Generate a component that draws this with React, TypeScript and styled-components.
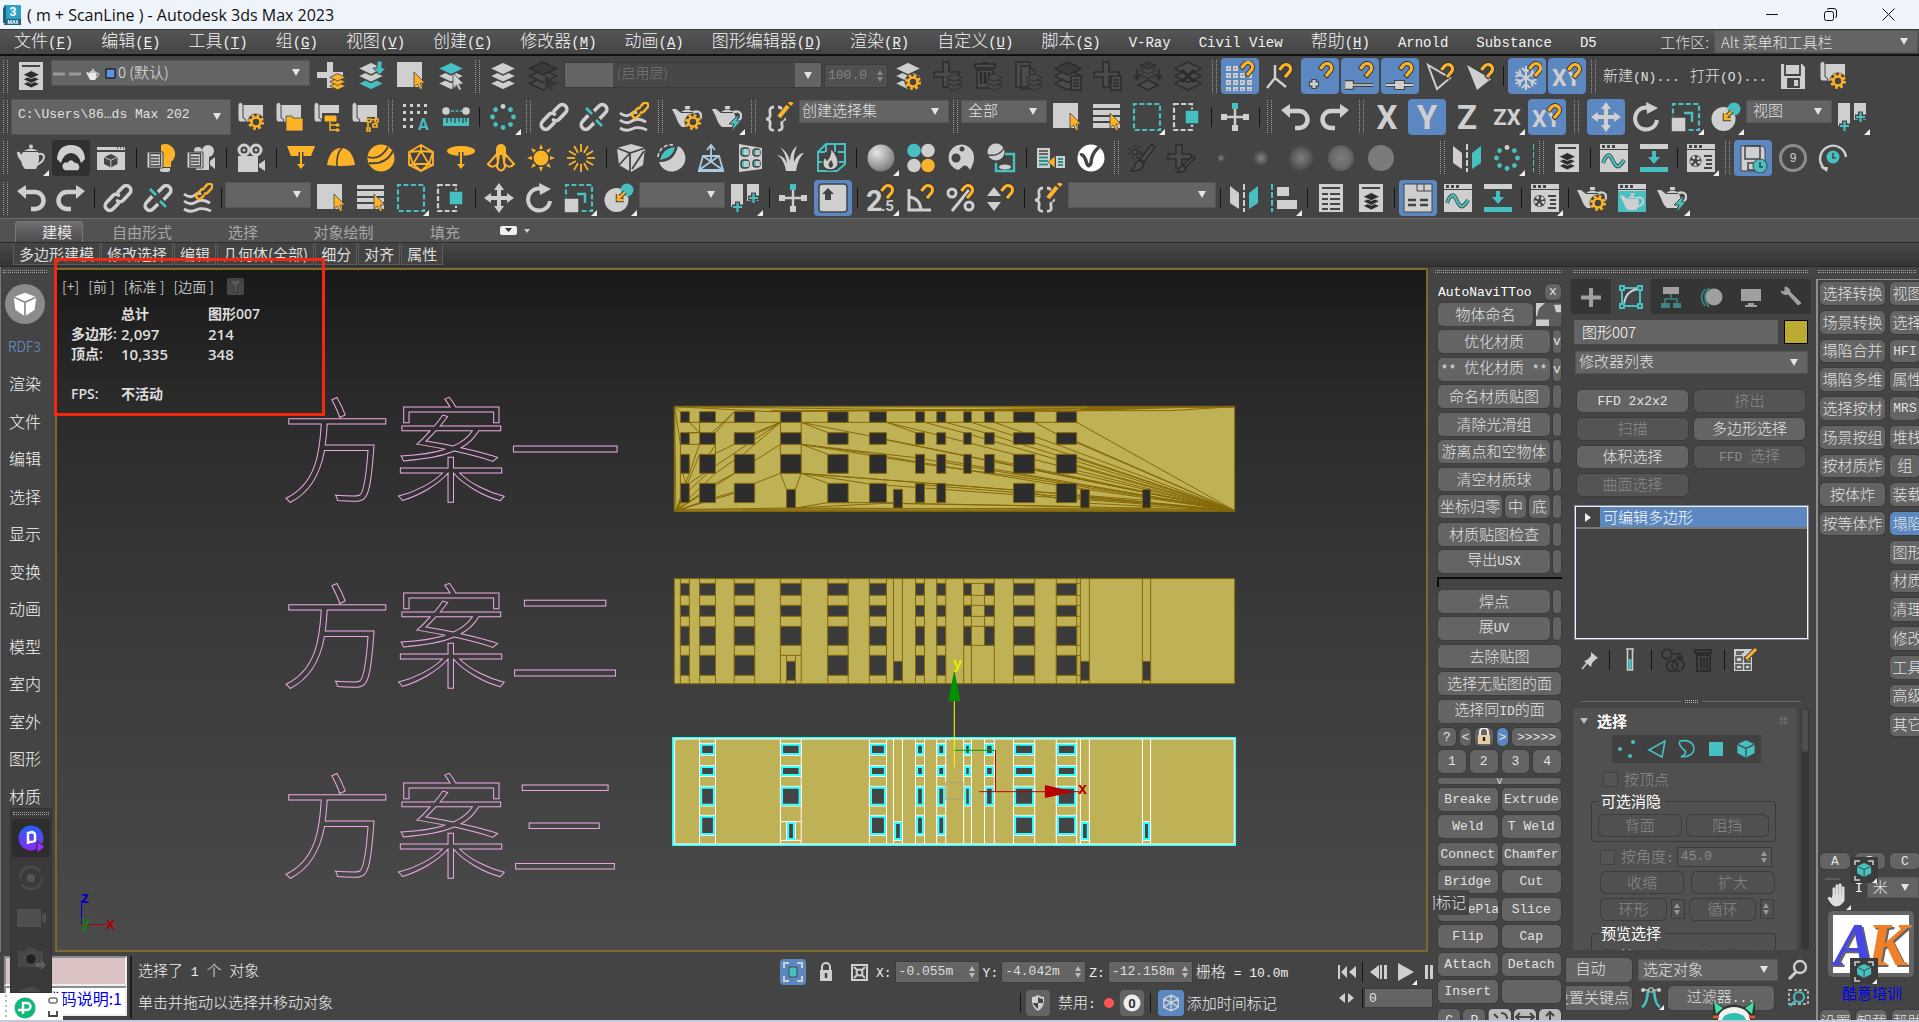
import React from "react";
import styled, { createGlobalStyle, css } from "styled-components";

const L = "#cfcfcf";
const T = "#46c0c0";
const O = "#fdb327";
const K = "#2c2c2c";
const BG = "#444444";
const BLUE = "#5c88c2";
const FIELD = "#646464";
const SANS = `"Noto Sans CJK SC", "Noto Sans", sans-serif`;
const MONO = `"Liberation Mono", "Noto Sans CJK SC", monospace`;

const Global = createGlobalStyle`
  * { box-sizing: border-box; }
  body { margin: 0; background: ${BG}; color: #e6e6e6; font: 300 15px/18px ${SANS}; overflow: hidden; }
  button, select, input { font: inherit; color: inherit; margin: 0; padding: 0; border: 0; background: none; }
  svg { display: block; flex: none; }
`;

/* ---------- mixed width text ---------- */
const Half = styled.span<{ $s: number }>`
  font-family: ${MONO};
  font-size: ${(p) => p.$s}px;
  font-weight: 400;
`;
const Pre = styled.span`
  white-space: pre;
`;
const Txt = ({ t, s = 13 }: { t: string; s?: number }) => (
  <Pre>
    {(t.match(/[\u3000-\uffef]+|[^\u3000-\uffef]+/g) || []).map((p, i) =>
      /[\u3000-\uffef]/.test(p) ? <React.Fragment key={i}>{p}</React.Fragment> : <Half key={i} $s={s}>{p}</Half>
    )}
  </Pre>
);

/* ---------- icon parts ---------- */
const Stack = ({ c = [L, L, L], s = BG, f = 1 }: { c?: string[]; s?: string; f?: number }) => (
  <g stroke={s} strokeWidth="1.4" transform={`scale(${f})`}>
    <path d="M15 16 28.500 22.500 15 29 1.500 22.500z" fill={c[2]} />
    <path d="M15 8.500 28.500 15 15 21.500 1.500 15z" fill={c[1]} />
    <path d="M15 1 28.500 7.500 15 14 1.500 7.500z" fill={c[0]} />
  </g>
);
const Gear = ({ x, y, c = O, b = BG }: { x: number; y: number; c?: string; b?: string }) => (
  <g fill="none">
    <circle cx={x} cy={y} r="8.500" fill={b} />
    <circle cx={x} cy={y} r="6.500" stroke={c} strokeWidth="3" strokeDasharray="2.6 2.5" />
    <circle cx={x} cy={y} r="4.500" stroke={c} strokeWidth="2.600" />
  </g>
);
const Magnet = ({ x = 21, y = 8 }: { x?: number; y?: number }) => (
  <g transform={`translate(${x} ${y}) rotate(40)`} fill="none">
    <path d="M-8 4.500H0a4.500 4.500 0 0 0 0-9H-6" transform="rotate(-90)" stroke="#333" strokeWidth="5" />
    <path d="M-7 4.500H0a4.500 4.500 0 0 0 0-9H-5" transform="rotate(-90)" stroke={O} strokeWidth="3.200" />
  </g>
);
const Arrow = ({ x = 18, y = 11, c = O }: { x?: number; y?: number; c?: string }) => (
  <path transform={`translate(${x} ${y})`} d="M0 0V15L3.500 12 6 17.500 8.500 16.300 6 11H11z" fill={c} stroke={BG} strokeWidth=".8" />
);
const Pot = ({ x = 0, y = 0, c = L }: { x?: number; y?: number; c?: string }) => (
  <g transform={`translate(${x} ${y})`} fill={c}>
    <circle cx="15" cy="3.500" r="2" />
    <path d="M8 8q7-5 14 0z" />
    <path d="M7 9H22q3 8-2 17H9q-3-3-4-8Q1 14 1 9q3-1 4 3z" />
    <path d="M22 11q6-1 6 3t-7 8" fill="none" stroke={c} strokeWidth="2" />
  </g>
);
const FlatPot = ({ c = L }: { c?: string }) => (
  <g fill={c}>
    <path d="M13 4h5v3h-5zM9 10q6-5 13 0z" />
    <path d="M0 7H4L9 11H22q4 6-2 14H10Q6 22 4 15z" />
    <path d="M21 10q7-2 8 3t-7 8" fill="none" stroke={c} strokeWidth="2.400" />
  </g>
);
const Bolt = () => <path d="M27 12 17 22h5l-3 8 10-11h-4z" fill={T} stroke={BG} strokeWidth="1" />;
const Chain = ({ cut = false }: { cut?: boolean }) => (
  <g fill="none" stroke={L} strokeWidth="3.600" strokeLinecap="round">
    <path d="M15 9l5-5a4.500 4.500 0 0 1 6.500 6.500l-6 6.500a4.500 4.500 0 0 1-6 1" />
    <path d="M15 21l-5 5A4.500 4.500 0 0 1 3.500 19.500l6-6.500a4.500 4.500 0 0 1 6-1" />
    {cut && <path d="M8 7l7 7M16 17l7 7" stroke={BG} strokeWidth="7" />}
    {cut && <path d="M7 6l6 6M17 18l6 6" stroke={T} strokeWidth="2.800" strokeLinecap="butt" />}
  </g>
);
const Scroll = () => (
  <g fill={L}>
    <path d="M7 3H27V20H7z" />
    <path d="M2 3q0-2.500 2.500-2.500T7 3V16q3 0 3 4H4.500Q2 20 2 17z" stroke={BG} strokeWidth="1" />
  </g>
);
const Win = () => (
  <g>
    <path d="M1 1H29V6H1zM1 7H29V29H1z" fill={L} />
    <path d="M3 2h3v3H3zM8 2h3v3H8zM13 2h3v3h-3z" fill={BG} />
  </g>
);
const Braces = () => (
  <g fill="none" stroke={L} strokeWidth="2.800">
    <path d="M10 5Q5 5 6 11T2 17q5 0 4 6t4 5M14 5q5 0 4 6t4 6q-5 0-4 6t-4 5" />
    <path d="M15 17 27 2" stroke={BG} strokeWidth="8" />
    <path d="M15 15 24 4M25.500 2.500 28 0" stroke={O} strokeWidth="4.200" />
  </g>
);
const Dashed = ({ c }: { c: string }) => (
  <path d="M2 2H28V28H2z" fill="none" stroke={c} strokeWidth="2.200" strokeDasharray="5 2.430" strokeDashoffset="2" />
);
const Letter = ({ t, s = 33 }: { t: string; s?: number }) => (
  <text x="15" y={s > 26 ? 27 : 23} textAnchor="middle" fontFamily="Roboto, sans-serif" fontWeight="700" fontSize={s} fill={L}>{t}</text>
);
const CubeShape = ({ c = T, e = BG }: { c?: string; e?: string }) => (
  <g>
    <path d="M15 2 28 8V21L15 28 2 21V8z" fill={c} />
    <path d="M2 8 15 14 28 8M15 14V28" fill="none" stroke={e} strokeWidth="1.800" />
  </g>
);
const Doc = () => <path d="M3 1H27V29H3z" fill={L} />;
const Sheet = () => <path d="M1 1H26V26H1z" fill={L} />;

const dim = { fill: "#4b4b4b", stroke: K, strokeWidth: 1.500 };
const DimStack = () => (
  <g transform="translate(12 12)"><Stack c={["#484848", "#484848", "#484848"]} s={K} f={0.6} /></g>
);

const icons: Record<string, React.ReactNode> = {
  explorer: <g><Doc /><path d="M6 5H24" stroke={BG} strokeWidth="2" /><g transform="translate(6 9)"><Stack c={[K, K, K]} s={L} f={0.62} /></g></g>,
  layerAdd: <g><path d="M11 1h6v10h10v6H17v10h-6V17H1v-6h10z" fill={L} /><g transform="translate(13 12)"><Stack c={[O, O, O]} f={0.58} /></g></g>,
  layerDown: <g><Stack c={[L, L, T]} /><path d="M21 0h5v7h4l-6.500 7L17 7h4z" fill={T} stroke={BG} /></g>,
  sel: <g><Sheet /><Arrow /></g>,
  layerSel: <g><Stack c={[T, L, L]} /><Arrow x={17} y={12} c={L} /></g>,
  layers: <Stack />,
  layersDim: <g><Stack c={["#3a3a3a", "#4a4a4a", "#4a4a4a"]} s={K} /><Arrow x={17} y={13} c="#333" /></g>,
  layerGear: <g><Stack /><Gear x={20} y={21} /></g>,
  dAdd: <g {...dim}><path d="M10 1h6v10h10v5H16v10h-6V16H1v-5h9z" /><DimStack /></g>,
  dTrash: <g {...dim}><path d="M8 3q4-3 8 0M2 3H22V7H2zM4 9H20V27H4z" /><path d="M8 11V23M12 11V23M16 11V19" strokeWidth="2.500" /><DimStack /></g>,
  dDoc: <g {...dim}><path d="M3 1H17V26H3zM8 5H16L22 11V28H8z" /><DimStack /></g>,
  dPaste: <g {...dim}><Stack c={["#3a3a3a", "#4a4a4a", "#4a4a4a"]} s={K} /><path d="M18 15H28V29H18zM20 19h6M20 22h6M20 25h6" /></g>,
  dAddPaste: <g {...dim}><path d="M10 1h6v10h10v5H16v10h-6V16H1v-5h9z" /><path d="M18 15H28V29H18zM20 19h6M20 22h6M20 25h6" /></g>,
  dMerge: <g {...dim}><g transform="translate(6 0)"><Stack c={["#3a3a3a", "#484848", "#484848"]} s={K} f={0.6} /></g><path d="M15 19 25 24 15 29 5 24zM4 8v9M26 8v9M1 14l3 4 3-4M23 14l3 4 3-4" /></g>,
  dX: <g><Stack c={["#4a4a4a", "#4a4a4a", "#4a4a4a"]} s={K} /><path d="M9 9 21 21M21 9 9 21" stroke={K} strokeWidth="3" /></g>,
  mGrid: <g><g fill={BG} stroke={L} strokeWidth="1.800">{[0, 1, 2, 3].map((r) => [0, 1, 2, 3].map((c) => (r === 0 && c > 1 ? null : <path key={r + "-" + c} d={`M${2 + c * 7} ${6 + r * 7}h3v3h-3z`} />)))}</g><Magnet x={23} y={6} /></g>,
  mAxis: <g><path d="M10 4V17L2 27M10 17l11 9" fill="none" stroke={L} strokeWidth="2.400" /><Magnet x={21} y={8} /></g>,
  mPoint: <g><path d="M9 18v10M4 23h10" stroke={BG} strokeWidth="5.500" /><path d="M9 19v8M5 23h8" stroke={L} strokeWidth="3" /><Magnet x={22} y={7} /></g>,
  mEnd: <g><path d="M1 21h6v6H1zM7 24H28" fill={L} stroke={BG} strokeWidth="4" /><path d="M1 21h6v6H1zM7 24H28" fill={L} stroke={L} strokeWidth="1.600" /><Magnet x={22} y={7} /></g>,
  mMid: <g><path d="M1 24H28M11 21h7v6h-7z" fill={L} stroke={BG} strokeWidth="4" /><path d="M1 24H28M11 21h7v6h-7z" fill={L} stroke={L} strokeWidth="1.800" /><Magnet x={22} y={7} /></g>,
  mTri: <g><path d="M3 4 12 28 25 17z" fill="none" stroke={L} strokeWidth="2" /><Magnet x={23} y={8} /></g>,
  mTriF: <g><path d="M2 4 12 29 26 18z" fill={L} /><Magnet x={23} y={8} /></g>,
  mSnow: <g><g stroke={L} strokeWidth="2" fill="none">{[0, 60, 120].map((a) => <g key={a} transform={`rotate(${a} 14 17)`}><path d="M14 5V29M10 7l4 4 4-4M10 27l4-4 4 4" /></g>)}</g><Magnet x={24} y={7} /></g>,
  mXY: <g><text x="0" y="25" fontFamily="Roboto, sans-serif" fontWeight="700" fontSize="23" fill={L}>XY</text><Magnet x={23} y={8} /></g>,
  save: <g><path d="M3 3H24L27 6V28H3z" fill={L} /><path d="M7 3H22V14H7zM10 18H21V26H10z" fill="none" stroke={BG} strokeWidth="1.800" /><path d="M10 18h6v8h-6z" fill={BG} /></g>,
  sGear: <g><Scroll /><Gear x={20} y={20} /></g>,
  sFolder: <g><Scroll /><path d="M12 14h6l1 2h10v13H12z" fill={O} stroke={BG} strokeWidth=".8" /></g>,
  sTree: <g><Scroll /><path d="M12 13h13v8H12zM18 21v7h4M18 24h4M22 23h5v2h-5zM22 27h5v2h-5z" fill="none" stroke={BG} strokeWidth="4" /><path d="M13 14h11v5H13zM24 22h3v2h-3zM24 27h3v2h-3z" fill={O} stroke={O} /><path d="M18 20v8h6M18 23h6" fill="none" stroke={O} strokeWidth="1.500" /></g>,
  sNode: <g><Scroll /><path d="M17 18h5v4M26 17v5M17 22v6" stroke={BG} strokeWidth="6" fill="none" /><path d="M17 17h4v3h-4zM25 17h3v3h-3zM17 26h3v3h-3zM23 22h4v3h-4zM21 18l5-1M18 21v4" fill="none" stroke={O} strokeWidth="1.600" /></g>,
  gridA: <g><g fill={L}>{[0, 1, 2, 3].map((r) => [0, 1, 2, 3].map((c) => (r > 1 && c > 1 ? null : <path key={r + "-" + c} d={`M${2 + c * 7} ${2 + r * 7}h3v3h-3z`} />)))}</g><text x="17" y="28" fontFamily="Roboto, sans-serif" fontWeight="700" fontSize="16" fill={T}>A</text></g>,
  ruler: <g><circle cx="5" cy="9" r="3.800" fill={L} /><circle cx="25" cy="9" r="3.800" fill={L} /><path d="M10 9H21" stroke={T} strokeWidth="1.600" strokeDasharray="3 1.500" /><path d="M2 16H28V24H2z" fill={T} /><path d="M6 16v5M10 16v4M14 16v5M18 16v4M22 16v5M25 16v4" stroke={BG} strokeWidth="1.300" /></g>,
  ring: <g>{[0, 45, 90, 135, 180, 225, 270, 315].map((a) => <circle key={a} cx="15" cy="4.500" r="2.400" fill={a ? T : L} transform={`rotate(${a} 15 15)`} />)}</g>,
  link: <Chain />,
  unlink: <Chain cut />,
  bind: <g><path d="M1 11q6 5 11 1t5 0M1 18q6 5 12 1t14 1M1 26q6 4 12 1t15 1" fill="none" stroke={L} strokeWidth="2.800" /><g transform="translate(12 -1) scale(.62)"><path d="M15 9l5-5a4.500 4.500 0 0 1 6.500 6.500l-6 6.500a4.500 4.500 0 0 1-6 1M15 21l-5 5A4.500 4.500 0 0 1 3.500 19.500l6-6.500a4.500 4.500 0 0 1 6-1" fill="none" stroke={O} strokeWidth="4" /></g></g>,
  potGear: <g><FlatPot /><Gear x={21} y={20} /></g>,
  potBolt: <g><FlatPot /><Bolt /></g>,
  pot: <Pot />,
  braces: <Braces />,
  selName: <g><path d="M1 2H28V6H1zM1 8H28V13H1zM1 15H28V19H1zM1 21H28V26H1z" fill={L} /><Arrow /></g>,
  region: <Dashed c={T} />,
  cross: <g><path d="M2 2H20V28H2z" fill="none" stroke={L} strokeWidth="2.200" strokeDasharray="5 2.200" /><path d="M13 8H27V22H13z" fill={T} stroke={BG} strokeWidth="1.500" /></g>,
  manip: <g><path d="M15 7V23M4 15H26" stroke={L} strokeWidth="2.400" /><path d="M12 1h6v6h-6z" fill={T} /><path d="M12 23h6v6h-6zM1 12h6v6H1zM23 12h6v6h-6z" fill={L} /></g>,
  undo: <g><path d="M8 9H19a7.500 7.500 0 0 1 0 17h-4" fill="none" stroke={L} strokeWidth="4.500" /><path d="M10 2V16L1 8z" fill={L} /></g>,
  redo: <g><path d="M22 9H11a7.500 7.500 0 0 0 0 17h4" fill="none" stroke={L} strokeWidth="4.500" /><path d="M20 2V16L29 8z" fill={L} /></g>,
  X: <Letter t="X" />,
  Y: <Letter t="Y" />,
  Z: <Letter t="Z" />,
  ZX: <Letter t="ZX" s={22} />,
  move: <g fill={L}><path d="M13 6h4v18h-4zM6 13h18v4H6z" /><path d="M15 0l5 7H10zM15 30l5-7H10zM0 15l7-5v10zM30 15l-7-5v10z" /></g>,
  rotate: <g><path d="M22 8A11 11 0 1 0 26 18" fill="none" stroke={L} strokeWidth="4" /><path d="M15 0 27 6 16 12z" fill={L} /></g>,
  scale: <g><Dashed c={T} /><path d="M13 11h8v9" fill="none" stroke={T} strokeWidth="2.400" /><path d="M0 15H15V30H0z" fill={L} stroke={BG} strokeWidth="1.500" /></g>,
  place: <g><circle cx="12.500" cy="17" r="12" fill={L} /><circle cx="23" cy="7" r="6.500" fill={T} /><path d="M13 17l8-8M14 11v6h6" fill="none" stroke={BG} strokeWidth="4.500" /><path d="M13 17l8-8M14 11v6h6" fill="none" stroke={O} strokeWidth="2.400" /></g>,
  pivot: <g><path d="M1 1H13V24H1zM17 1H29V18H17z" fill={L} /><path d="M2 24h11M7.500 18.500v11M18 15h11M23.500 9.500v11" stroke={BG} strokeWidth="5" /><path d="M3 24h9M7.500 19.500v9.500M19 15h9M23.500 10.500v9.500" stroke={T} strokeWidth="2.200" /></g>,
  cloud: <g fill={L}><path d="M1 16Q2 2 15 2T29 16L25 20Q22 10 15 10T5 20z" /><path d="M9 28a5 5 0 0 1-1-9q2-1 3 0 4-5 8 0a5 5 0 0 1 3 9z" stroke="#303030" strokeWidth="1.500" /></g>,
  winCube: <g><path d="M1 4H29V7H1zM1 9H29V27H1z" fill={L} /><path d="M21 5h1M24 5h1M27 5h1" stroke={BG} strokeWidth="1.500" /><g transform="translate(7 10) scale(.52)"><CubeShape c={BG} e={L} /></g></g>,
  bulb: <g><path d="M18 1a10 10 0 0 1 7 18v5H15V2z" fill={O} /><path d="M14 25h10v3l-2 1h-6l-2-1z" fill={L} /><path d="M1 9H17V25H1z" fill={L} stroke={BG} /><path d="M4 10.500H14.500V23H4zM5 14h8M5 17h8M5 20h8" stroke={BG} strokeWidth="1.300" fill="none" /></g>,
  camList: <g><circle cx="22" cy="8" r="6" fill={L} /><circle cx="12" cy="8" r="4" fill={L} /><path d="M10 11H23V27H10zM24 18l5-4v12l-5-4z" fill={L} /><path d="M1 9H17V25H1z" fill={L} stroke={BG} /><path d="M4 10.500H14.500V23H4zM5 14h8M5 17h8M5 20h8" stroke={BG} strokeWidth="1.300" fill="none" /></g>,
  camera: <g><circle cx="8" cy="7" r="5" fill="none" stroke={L} strokeWidth="3" /><circle cx="20" cy="7" r="5" fill="none" stroke={L} strokeWidth="3" /><circle cx="8" cy="7" r="1.500" fill={L} /><circle cx="20" cy="7" r="1.500" fill={L} /><path d="M2 13H22V29H2zM23 21l6-4v11l-6-4z" fill={L} /></g>,
  lightPlane: <g fill={O}><path d="M1 3H29L25 13H5z" /><path d="M15 9v18" stroke={BG} strokeWidth="5" /><path d="M15 9v15" stroke={O} strokeWidth="2" /><path d="M11 21h8l-4 5z" /></g>,
  dome: <g><path d="M1 22Q4 5 15 5T29 22Q15 24 1 22z" fill={O} /><path d="M11 24Q10 10 16 5" fill="none" stroke={BG} strokeWidth="1.600" /></g>,
  ball: <g><circle cx="15" cy="15" r="13.500" fill={O} /><path d="M2 14Q14 18 22 4M3 20Q20 22 27 8" fill="none" stroke={BG} strokeWidth="1.800" /></g>,
  ico: <g fill="none" stroke={O} strokeWidth="1.800"><path d="M15 2 27 9V22L15 28 3 22V9z M15 8 23 21H7zM15 2v6M27 9 15 8 3 9M3 9l4 12-4 1M27 9l-4 12 4 1M7 21l8 7 8-7" /></g>,
  disc: <g><ellipse cx="15" cy="8" rx="14" ry="5" fill={O} /><path d="M15 9V26" stroke={BG} strokeWidth="5" /><path d="M15 9V24" stroke={O} strokeWidth="2" /><path d="M11 21h8l-4 5z" fill={O} /></g>,
  spot: <g fill="none" stroke={O} strokeWidth="2"><path d="M11 11V6a4 4 0 0 1 8 0v5z" fill={O} /><path d="M11 11 2 21q5 6 10-1zM19 11l9 10q-5 6-10-1zM13 12l-2 12q4 7 8 0l-2-12" /></g>,
  sun: <g><circle cx="15" cy="15" r="7.500" fill={O} />{[0, 45, 90, 135, 180, 225, 270, 315].map((a) => <path key={a} d="M13 6L15 1l2 5z" fill={O} transform={`rotate(${a} 15 15)`} />)}</g>,
  burst: <g>{[0, 30, 60, 90, 120, 150, 180, 210, 240, 270, 300, 330].map((a) => <path key={a} d="M15 1v8" stroke={O} strokeWidth="1.800" transform={`rotate(${a} 15 15)`} />)}</g>,
  cubeCut: <g><path d="M15 1 29 5 27 22 15 29 3 22 1 5z" fill={L} /><path d="M1 5 14 10 29 5M14 10V29M14 10 3 22M16 26l12-18" fill="none" stroke={BG} strokeWidth="1.800" /></g>,
  ballCut: <g><path d="M22 3A13.500 13.500 0 1 1 3 19Q18 20 22 3z" fill={L} /><path d="M4 17Q7 5 19 4 17 15 4 17z" fill={T} /><path d="M2 14A13 13 0 0 1 17 2" fill="none" stroke={L} strokeWidth="1.600" strokeDasharray="4 2" /></g>,
  tower: <g fill="none" stroke="#a9cbe2" strokeWidth="1.800"><path d="M7 13H23L27 27H3zM7 13 27 27M23 13 3 27M15 3V19M11 7l4-5 4 5M2 28H28" /></g>,
  instances: <g fill={L}><path d="M3 1 26 5V26L3 29z" /><g fill={T} stroke={BG} strokeWidth="1.500"><rect x="5" y="5" width="8" height="8" rx="3" /><rect x="17" y="6" width="7" height="7" rx="3" /><rect x="5" y="17" width="8" height="8" rx="3" /><rect x="17" y="17" width="7" height="7" rx="3" /></g><path d="M8 6h5v6H8zM20 7h4v5h-4zM8 18h5v6H8zM20 18h4v5h-4z" opacity=".8" /></g>,
  grass: <path d="M10 28Q8 16 1 12q8 1 10 9Q10 10 4 4q8 5 10 14 0-10 7-15-4 9-3 16 4-9 10-9-6 5-8 18z" fill={L} />,
  fire: <g><path d="M2 9 10 1H29V21L21 28H2zM2 9H9M10 1V9M19 1v8M29 9H22M2 19H8M22 19h7" fill="none" stroke={T} strokeWidth="2" /><path d="M14 4q10 11 8 18-2 5-8 5t-7-5q-1-5 2-8l2 3q5-5 3-13z" fill={L} stroke={BG} strokeWidth="1.500" /><path d="M15 17q4 5 0 8-5-2 0-8z" fill={BG} /></g>,
  sphere: <circle cx="15" cy="15" r="13.500" fill="url(#sph)" />,
  four: <g><circle cx="8" cy="7.500" r="6.800" fill={T} /><circle cx="22" cy="7.500" r="6.800" fill={L} /><circle cx="8" cy="22.500" r="6.800" fill={L} /><circle cx="22" cy="22.500" r="6.800" fill={O} /></g>,
  holes: <g><path d="M15 1.500A13 13 0 0 1 28 15q0 5-4 12-4-7-8-3-3 3-4 3A13 13 0 0 1 15 1.500z" fill={L} /><circle cx="16" cy="6" r="2.500" fill={BG} /><circle cx="10" cy="15" r="4.500" fill={BG} /></g>,
  ballBox: <g><path d="M19 11h9V28H10V20" fill="none" stroke={T} strokeWidth="2.400" /><circle cx="10" cy="9" r="8.500" fill={L} /><path d="M2 12Q13 14 18 5" stroke={BG} fill="none" strokeWidth="1.500" /><ellipse cx="19" cy="24" rx="6" ry="2.500" fill={L} /></g>,
  convert: <g><path d="M1 5H14V25H1zM20 13H29V25H20z" fill={L} /><path d="M3 8h9M3 11h9" stroke={BG} strokeWidth="1.500" /><path d="M3 14.500h9M3 18h9M3 21.500h9M22 16h5M22 19h5M22 22h5" stroke="#2a8f8f" strokeWidth="1.800" /><path d="M19 13V25L12 19z" fill={O} stroke={BG} strokeWidth=".6" /></g>,
  vray: <g><circle cx="15" cy="15" r="13.500" fill="#fff" /><path d="M4 12q4-2 7 9 2 4 4-1 0-9 8-16" fill="none" stroke={BG} strokeWidth="3.500" /></g>,
  dPaint: <g {...dim}><circle cx="9" cy="9" r="6" strokeDasharray="3 2" /><circle cx="9" cy="9" r="3" /><path d="M26 1l3 3-11 15-4-3zM13 17l5 4q-3 8-13 7 4-3 4-7z" /></g>,
  dBrush: <g {...dim}><path d="M10 2h6v9h9v5h-9v9h-6v-9H2v-5h8z" /><path d="M27 13l2 2-9 9-3-2zM16 22l4 3q-2 5-9 4 3-2 3-4z" /></g>,
  dot1: <circle cx="15" cy="15" r="4" fill="url(#soft)" />,
  dot2: <circle cx="15" cy="15" r="8" fill="url(#soft)" />,
  dot3: <circle cx="15" cy="15" r="13" fill="url(#soft2)" />,
  dot4: <circle cx="15" cy="15" r="13" fill="url(#soft3)" />,
  dot5: <circle cx="15" cy="15" r="13" fill="#7a7a7a" />,
  mirror: <g><path d="M1 3 10 10V26L1 20z" fill={L} /><path d="M15 1V29" stroke={L} strokeWidth="2" strokeDasharray="6 2" /><path d="M29 3 20 10V26L29 20z" fill={T} /></g>,
  align: <g><path d="M3 1V29" stroke={T} strokeWidth="2" strokeDasharray="6 2" /><path d="M8 4H20V13H8zM8 17H28V26H8z" fill={L} /></g>,
  curve: <g><Win /><path d="M4 20q5-13 9-4t7 7q3-2 5-6" fill="none" stroke={BG} strokeWidth="4" /><path d="M4 20q5-13 9-4t7 7q3-2 5-6" fill="none" stroke={T} strokeWidth="2.400" /></g>,
  down: <g><path d="M1 1H29V6H1z" fill={L} /><path d="M1 24H29V29H1z" fill={T} /><path d="M13 8h4v6h4l-6 7-6-7h4z" fill={T} /></g>,
  matEd: <g><Win /><circle cx="9.500" cy="18" r="6" fill={BG} /><circle cx="9.500" cy="18" r="3.800" fill="none" stroke={L} strokeWidth="3" strokeDasharray="2.500 2.300" /><path d="M18 13h8M20 17h6M20 21h6M18 25h8" stroke={BG} strokeWidth="1.800" /></g>,
  saveClock: <g><path d="M3 3H25L27 6V28H3z" fill={L} stroke={BG} /><path d="M7 3H22V16H7zM10 20H18V27H10z" fill="none" stroke={BG} strokeWidth="1.500" /><circle cx="22" cy="23" r="7" fill={T} stroke={BG} /><path d="M22 19v5h3" fill="none" stroke={BG} strokeWidth="1.600" /></g>,
  nine: <g><circle cx="15" cy="15" r="12.500" fill="none" stroke="#8c8c8c" strokeWidth="3" /><text x="15" y="19" textAnchor="middle" fontFamily="Liberation Mono" fontSize="12" fill={L}>9</text></g>,
  history: <g><path d="M28 14A13 13 0 1 0 6 25" fill="none" stroke={L} strokeWidth="2.400" /><path d="M2 24h8l-1 5z" fill={L} /><circle cx="15" cy="14" r="6.500" fill={T} /><path d="M15 10v5h3" fill="none" stroke={BG} strokeWidth="1.600" /></g>,
  keyb: <g><rect x="1" y="1" width="28" height="28" rx="3" fill={L} stroke={BG} strokeWidth="1.500" /><path d="M10 5l6 6h-3v6H7v-6H4z" fill={BG} /></g>,
  snap25: <g><text x="0" y="28" fontFamily="Roboto, sans-serif" fontWeight="700" fontSize="29" fill={L}>2</text><text x="15" y="28" fontFamily="Roboto, sans-serif" fontWeight="700" fontSize="15" fill={L}>.5</text><Magnet x={22} y={7} /></g>,
  snapA: <g><path d="M3 6V27H25M3 14q11 1 12 13" fill="none" stroke={L} strokeWidth="3" /><Magnet x={22} y={7} /></g>,
  snapP: <g fill="none" stroke={L} strokeWidth="3"><circle cx="6" cy="10" r="4" /><circle cx="23" cy="23" r="4" /><path d="M23 7 6 28" /><Magnet x={22} y={7} /></g>,
  snapS: <g><path d="M1 13 8 4l7 9zM1 19h14L8 28z" fill={L} /><Magnet x={22} y={7} /></g>,
  list: <g><Doc /><path d="M6 5H24M6 11h6M14 11h10M6 16h6M14 16h10M6 21h6M14 21h10M6 26h6M14 26h10" stroke={BG} strokeWidth="2" /></g>,
  ribbon: <g><path d="M1 1H29V29H1z" fill={L} stroke={BG} /><path d="M14 1v7h15M21 1v7" fill="none" stroke={BG} /><path d="M5 17h8M5 22h8M17 17h8M17 22h8" stroke={BG} strokeWidth="2.400" /></g>,
  potWin: <g><Win /><path d="M1 8H29V29H1z" fill={T} /><g transform="translate(3 7) scale(.8)"><FlatPot /></g></g>,
};

const Ico = ({ n, s = 30 }: { n: string; s?: number }) => (
  <svg width={s} height={s} viewBox="0 0 30 30" aria-hidden="true">{icons[n]}</svg>
);

/* ---------- window chrome ---------- */
const Shell = styled.div`
  display: flex;
  flex-direction: column;
  height: 100vh;
  border-bottom: 2px solid #c3cbdc;
  overflow: hidden;
  position: relative;
`;
const Paints = styled.svg`
  position: absolute;
`;
const TitleBar = styled.header`
  display: flex;
  align-items: center;
  height: 29px;
  padding-left: 3px;
  gap: 6px;
  background: #eef4fa;
  color: #111;
  font: 400 16px/20px "Open Sans", ${SANS};
  flex: none;
`;
const WindowButtons = styled.div`
  display: flex;
  margin-left: auto;
  padding-right: 2px;
`;
const WindowButton = styled.button`
  width: 58px;
  height: 28px;
  display: grid;
  place-items: center;
`;
const MenuBar = styled.nav`
  display: flex;
  align-items: center;
  height: 27px;
  padding: 0 0 1px 14px;
  gap: 28px;
  background: linear-gradient(#555, #444);
  border-top: 1px solid #383838;
  border-bottom: 2px solid #111;
  font-size: 17px;
  line-height: 22px;
  color: #f2f2f2;
  flex: none;
`;
const MenuItem = styled.button`
  white-space: nowrap;
  line-height: 20px;
`;
const Workspace = styled.label`
  display: flex;
  align-items: center;
  gap: 5px;
  margin-left: auto;
  padding-right: 1px;
  font-size: 15px;
  color: #dcdcdc;
`;

const ComboBox = styled.div<{ $w: number; $h: number; $top?: boolean; $pad?: number; $mono?: boolean }>`
  position: relative;
  flex: none;
  width: ${(p) => p.$w}px;
  height: ${(p) => p.$h}px;
  background: ${FIELD};
  border: 1px solid #555;
  color: #e2e2e2;
  ${(p) => p.$top && css`align-self: flex-start; margin-top: 4px;`}
  select {
    appearance: none;
    width: 100%;
    height: 100%;
    padding-left: ${(p) => p.$pad ?? 4}px;
    padding-right: 22px;
    padding-bottom: 3px;
    font: ${(p) => (p.$mono ? `400 13px/18px ${MONO}` : `300 15px/18px ${SANS}`)};
    text-overflow: clip;
  }
  & > svg:last-child {
    position: absolute;
    right: 9px;
    top: calc(50% - 4px);
    pointer-events: none;
  }
`;
const Lead = styled.span`
  position: absolute;
  left: 1px;
  top: 6px;
  pointer-events: none;
`;
const Combo = ({ label, value = "", w, h = 26, top, pad, mono, children }: { label: string; value?: string; w: number; h?: number; top?: boolean; pad?: number; mono?: boolean; children?: React.ReactNode }) => (
  <ComboBox $w={w} $h={h} $top={top} $pad={pad} $mono={mono}>
    <select aria-label={label}><option>{value}</option></select>
    {children}
    <svg width="8" height="7" viewBox="0 0 8 7"><path d="M0 0H8L4 7z" fill="#e4e4e4" /></svg>
  </ComboBox>
);

/* ---------- toolbars ---------- */
const Toolbars = styled.section`
  display: grid;
  grid-template-rows: 40px 41px 41px 40px;
  flex: none;
`;
const ToolRow = styled.div`
  display: flex;
  align-items: center;
  overflow: hidden;
`;
const ToolCell = styled.button<{ $on?: string; $fly?: boolean; $w: number }>`
  position: relative;
  flex: none;
  display: grid;
  place-items: center;
  width: ${(p) => p.$w - 2}px;
  height: 36px;
  margin: 0 1px;
  border-radius: 4px;
  ${(p) => p.$on && css`background: ${p.$on};`}
  ${(p) => p.$fly && css`
    &::after {
      content: "";
      position: absolute;
      right: 1px;
      bottom: 0;
      border: 3px solid transparent;
      border-right-color: #eee;
      border-bottom-color: #eee;
    }
  `}
`;
const B = ({ n, on, dark, fly, w = 40 }: { n: string; on?: boolean; dark?: boolean; fly?: boolean; w?: number }) => (
  <ToolCell aria-label={n} $on={on ? BLUE : dark ? "#303030" : undefined} $fly={fly} $w={w}><Ico n={n} /></ToolCell>
);
const Row = ({ of }: { of: string }) => <>{of.split(" ").map((n, i) => <B key={i} n={n} />)}</>;
const Grip = styled.span<{ $w?: number }>`
  flex: none;
  width: ${(p) => p.$w ?? 12}px;
  height: 33px;
  &::before {
    content: "";
    display: block;
    width: 3px;
    height: 100%;
    margin: 0 auto;
    border: dotted #9a9a9a;
    border-width: 0 1px;
  }
`;
const Sep = styled.span<{ $w?: number }>`
  flex: none;
  width: ${(p) => p.$w ?? 7}px;
  height: 20px;
  background: linear-gradient(#151515, #151515) center / 1px 100% no-repeat;
`;
const Spacer = styled.span<{ $w: number }>`
  flex: none;
  width: ${(p) => p.$w}px;
`;
const TextButton = styled.button`
  flex: none;
  width: 87px;
  text-align: left;
  padding-left: 4px;
  white-space: nowrap;
  color: #e0e0e0;
`;
const DimCombo = styled.div`
  display: flex;
  align-self: flex-start;
  margin: 6px 2px 0 1px;
  width: 258px;
  height: 26px;
  flex: none;
  align-items: center;
  background: ${FIELD};
  border: 1px solid #3a3a3a;
  input {
    margin-left: 48px;
    width: 182px;
    height: 24px;
    padding: 0 0 7px 4px;
    background: #474747;
    color: #777;
    font-size: 14px;
  }
  svg { margin-left: 9px; }
`;
const Spin = styled.div<{ $w: number; $h: number; $c?: string; $bg?: string }>`
  display: flex;
  align-items: center;
  justify-content: space-between;
  flex: none;
  width: ${(p) => p.$w}px;
  height: ${(p) => p.$h}px;
  padding-right: 4px;
  background: ${(p) => p.$bg ?? FIELD};
  border: 1px solid #3c3c3c;
  color: ${(p) => p.$c ?? "#dcdcdc"};
  input {
    min-width: 0;
    width: 100%;
    padding-left: 3px;
    font: 400 13px/16px ${MONO};
  }
`;
const UpDown = ({ c = "#bbb" }: { c?: string }) => (
  <svg width="6" height="12" viewBox="0 0 6 12"><path d="M0 5 3 0 6 5zM0 7 3 12 6 7z" fill={c} /></svg>
);

/* ---------- ribbon ---------- */
const RibbonTabs = styled.div`
  display: flex;
  align-items: flex-end;
  height: 25px;
  padding-left: 15px;
  background: #525252;
  border-top: 1px solid #6c6c6c;
  border-bottom: 1px solid #2b2b2b;
  flex: none;
`;
const RibbonTab = styled.button<{ $on?: boolean; $w: number }>`
  width: ${(p) => p.$w}px;
  height: 21px;
  font: 400 15px/18px ${SANS};
  color: ${(p) => (p.$on ? "#e2e2e2" : "#a6a6a6")};
  ${(p) => p.$on && css`
    padding-left: 16px;
    background: linear-gradient(#707070, #4c4c4c);
    border: 1px solid #777;
    border-bottom: 0;
    border-radius: 3px 3px 0 0;
  `}
`;
const RibbonPanels = styled.div`
  display: flex;
  gap: 1px;
  height: 24px;
  padding-left: 13px;
  background: linear-gradient(#484848, #343434);
  border-bottom: 1px solid #2b2b2b;
  flex: none;
`;
const RibbonPanel = styled.button`
  height: 22px;
  padding: 0 5px;
  border: 1px solid #5c5c5c;
  border-top: 0;
  font: 400 15px/20px ${SANS};
  color: #dedede;
  background: #434343;
`;

/* ---------- main area ---------- */
const Main = styled.main`
  display: flex;
  flex: 1;
  min-height: 0;
`;
const Work = styled.div`
  display: flex;
  flex-direction: column;
  flex: 1;
  min-width: 0;
`;
const WorkTop = styled.div`
  display: flex;
  flex: 1;
  min-height: 0;
  padding-right: 5px;
`;
const SideBar = styled.aside`
  display: flex;
  flex-direction: column;
  width: 55px;
  flex: none;
  padding-top: 3px;
  border-left: 1px solid #777;
  overflow: hidden;
`;
const Dots = styled.span<{ $m?: string }>`
  display: block;
  flex: none;
  align-self: stretch;
  height: 3px;
  margin: ${(p) => p.$m ?? "0"};
  border: dotted #a5a5a5;
  border-width: 1px 0;
`;
const SideLogo = styled.button`
  display: grid;
  place-items: center;
  width: 40px;
  height: 40px;
  margin: 11px 0 4px 4px;
  && { background: #8b8b8b; }
  border-radius: 50%;
  flex: none;
`;
const SideItem = styled.button<{ $accent?: boolean }>`
  flex: none;
  height: 37px;
  padding-left: ${(p) => (p.$accent ? 7 : 8)}px;
  text-align: left;
  font-size: ${(p) => (p.$accent ? 14 : 16)}px;
  line-height: 37px;
  color: ${(p) => (p.$accent ? "#6596d8" : "#f4f4f4")};
  &:nth-child(even) { margin-bottom: 1px; }
`;
const View = styled.div`
  position: relative;
  flex: 1;
  min-width: 0;
  margin-top: 1px;
  border: 2px solid #7e682a;
  background: linear-gradient(#191919, #2a2a2a 18%, #3a3a3a 52%, #4b4b4b);
  overflow: hidden;
`;
const Scene = styled.svg`
  position: absolute;
  left: 0;
  top: 0;
`;
const ViewLabels = styled.div`
  position: absolute;
  left: 5px;
  top: 4px;
  display: flex;
  gap: 9px;
  align-items: center;
  font: 400 14px/24px ${SANS};
  color: #bdbdbd;
  svg { margin-left: 4px; }
`;
const Stats = styled.table`
  position: absolute;
  left: 14px;
  top: 34px;
  border-collapse: collapse;
  font: 600 15px/20px "Open Sans", ${SANS};
  color: #dedede;
  td, th { padding: 0; text-align: left; font-weight: 600; height: 20px; white-space: nowrap; }
  th { font-size: 14px; }
  th:first-child { width: 50px; }
  td:nth-child(2), th:nth-child(2) { width: 87px; }
`;
const Highlight = styled.div`
  position: absolute;
  left: 54px;
  top: 258px;
  width: 271px;
  height: 158px;
  border: 3px solid #f5280f;
  pointer-events: none;
`;

/* ---------- status bar ---------- */
const Status = styled.footer`
  display: flex;
  height: 68px;
  flex: none;
  padding: 4px 0 0 4px;
`;
const Listener = styled.div`
  width: 123px;
  display: grid;
  grid-template-rows: 30px 30px;
  flex: none;
`;
const ListenerLine = styled.input`
  width: 123px;
  height: 30px;
  text-align: right;
  && {
    padding: 0 3px 7px 0;
    font: 400 16px/20px ${SANS};
    color: #0000ee;
    background: #fff;
    border: 2px solid #8d8d8d;
    border-right-color: #eee;
    border-bottom-color: #eee;
  }
  &&:first-child { background: #dcc3c3; }
`;
const StatusText = styled.div`
  flex: 1;
  margin-left: 3px;
  padding-left: 6px;
  border-left: 2px solid #1b1b1b;
  color: #f0f0f0;
  height: 62px;
  display: grid;
  grid-template-rows: 31px 30px;
  align-items: center;
`;
const StatusMid = styled.div`
  width: 558px;
  flex: none;
  display: grid;
  grid-template-rows: 32px 30px;
  color: #eee;
`;
const StatusLine = styled.div<{ $pl?: number }>`
  display: flex;
  align-items: center;
  gap: 3px;
  padding-left: ${(p) => p.$pl ?? 0}px;
`;
const ToolTiny = styled.button<{ $bg?: string; $w?: number; $m?: string }>`
  display: grid;
  place-items: center;
  width: ${(p) => p.$w ?? 26}px;
  height: 26px;
  margin: ${(p) => p.$m ?? "0"};
  border-radius: 4px;
  background: ${(p) => p.$bg ?? "none"};
`;
const Player = styled.div`
  width: 95px;
  flex: none;
  display: grid;
  grid-template-rows: 32px 20px;
`;
const PlayerField = styled.input`
  width: 69px;
  height: 20px;
  && { background: ${FIELD}; padding-left: 4px; font: 400 13px/18px ${MONO}; border: 1px solid #3c3c3c; }
`;

/* ---------- side panels ---------- */
const PButton = styled.button<{ $w?: number; $on?: boolean; $off?: boolean; $h?: number; $flat?: boolean }>`
  display: flex;
  align-items: center;
  justify-content: center;
  overflow: hidden;
  ${(p) => (p.$w ? css`width: ${p.$w}px; flex: none;` : css`flex: 1 1 0; min-width: 0;`)}
  height: ${(p) => p.$h ?? 23}px;
  && { padding-bottom: 2px; background: ${(p) => (p.$on ? BLUE : p.$flat ? "#505050" : p.$off ? "#545454" : FIELD)}; }
  border-radius: 5px;
  box-shadow: 0 0 0 1px #3d3d3d;
  color: ${(p) => (p.$off ? "#8a8a8a" : "#e2e2e2")};
  line-height: 20px;
  white-space: nowrap;
`;
const Navi = styled.aside`
  width: 132px;
  flex: none;
  padding: 3px 4px 0 5px;
  overflow: hidden;
  position: relative;
`;
const NaviHead = styled.div`
  display: flex;
  justify-content: space-between;
  align-items: center;
  height: 29px;
  padding-top: 8px;
  color: #fff;
  margin-bottom: 1px;
`;
const Lines = styled.div<{ $mt?: number }>`
  display: flex;
  flex-direction: column;
  gap: 4px;
  margin-top: ${(p) => p.$mt ?? 0}px;
  & > :nth-child(even) { margin-bottom: 1px; }
`;
const Line = styled.div<{ $g?: number; $mt?: number }>`
  display: flex;
  gap: ${(p) => p.$g ?? 3}px;
  margin-top: ${(p) => p.$mt ?? 0}px;
`;
const Groove = styled.div`
  height: 10px;
  margin: 3px -1px 3px;
  border: solid #0c0c0c;
  border-width: 2px 0 0 2px;
`;
const Tag = styled.span`
  position: absolute;
  left: 0;
  top: 623px;
  width: 36px;
  height: 25px;
  display: flex;
  justify-content: flex-end;
  overflow: hidden;
  background: ${BG};
  padding-right: 3px;
  line-height: 24px;
  white-space: nowrap;
`;
const Command = styled.aside`
  width: 251px;
  flex: none;
  display: flex;
  flex-direction: column;
  padding: 3px 5px 0 6px;
  overflow: hidden;
`;
const Tabs = styled.div`
  display: flex;
  height: 35px;
  margin-top: 6px;
  background: #353535;
`;
const Tab = styled.button<{ $on?: boolean }>`
  flex: 1;
  display: grid;
  place-items: center;
  && { background: ${(p) => (p.$on ? BG : "none")}; }
`;
const NameRow = styled.div`
  display: flex;
  gap: 6px;
  margin: 6px 3px 0;
`;
const NameField = styled.input`
  flex: 1;
  min-width: 0;
  height: 24px;
  && { background: ${FIELD}; padding: 0 0 2px 8px; color: #fff; }
`;
const Swatch = styled.button`
  width: 24px;
  height: 24px;
  && { background: #bcab33; border: 1px solid #000; }
`;
const ModGrid = styled.div`
  display: grid;
  grid-template-columns: 111px 111px;
  gap: 6px;
  padding: 0 6px;
  margin-top: 16px;
`;
const StackBox = styled.div`
  height: 135px;
  margin: 9px 2px 0 3px;
  border: 2px solid #f2f2f6;
  outline: 1px solid #83869a;
  outline-offset: -1px;
`;
const StackRow = styled.div`
  display: flex;
  align-items: center;
  height: 22px;
  border-bottom: 2px solid #777;
  span { flex: 1; background: ${BLUE}; color: #fff; padding-left: 3px; line-height: 20px; }
  svg { margin: 0 9px; }
`;
const StackTools = styled.div`
  display: flex;
  align-items: center;
  height: 40px;
  padding-left: 7px;
`;
const Splitter = styled.div`
  display: flex;
  align-items: center;
  gap: 4px;
  margin: 20px 10px 5px;
  i { flex: 1; height: 1px; background: #6c6c6c; }
`;
const Rollouts = styled.div`
  display: flex;
  gap: 4px;
  height: 242px;
  overflow: hidden;
  flex: none;
`;
const Rollout = styled.div`
  width: 224px;
  margin-left: 2px;
  height: 260px;
  padding: 0 17px 0 18px;
  border-radius: 4px;
  background: #505050;
  color: #8b8b8b;
`;
const RollHead = styled.h2`
  display: flex;
  align-items: center;
  gap: 9px;
  height: 27px;
  margin: 0 -8px 0 -11px;
  padding-bottom: 2px;
  font-size: 15px;
  font-weight: 700;
  color: #fff;
  svg:last-child { margin-left: auto; }
`;
const SubObj = styled.div`
  display: flex;
  width: 149px;
  height: 28px;
  margin-left: 21px;
  background: #414141;
  button { flex: 1; display: grid; place-items: center; }
`;
const Check = styled.label`
  display: flex;
  align-items: center;
  gap: 6px;
  input {
    appearance: none;
    width: 15px;
    height: 15px;
    border: 1px solid #424242;
    background: #555;
  }
`;
const Group = styled.fieldset<{ $h: number }>`
  height: ${(p) => p.$h}px;
  min-width: 0;
  margin: 0 4px 0 0;
  padding: 5px 7px 0;
  border: 1px solid #3a3a3a;
  border-radius: 3px;
  display: flex;
  align-items: flex-start;
  gap: 6px;
  legend { padding: 0 4px 0 2px; color: #fff; font-weight: 400; line-height: 18px; }
`;
const Radio = styled.label`
  display: flex;
  flex: none;
  gap: 5px;
  align-items: center;
  color: #fff;
  white-space: nowrap;
  & + & { color: #8b8b8b; }
  input { appearance: none; width: 15px; height: 15px; border-radius: 50%; border: 1px solid #444; background: #606060; flex: none; }
`;
const Track = styled.div`
  width: 8px;
  border-radius: 4px;
  background: #363636;
  &::before { content: ""; display: block; height: 43px; border-radius: 4px; background: #4f4f4f; border: 1px solid #3a3a3a; }
`;
const Keys = styled.div`
  display: grid;
  grid-template-columns: 66px 1fr 32px;
  grid-template-rows: 24px 24px;
  gap: 4px 6px;
  margin: 8px -8px 0 -5px;
  align-items: center;
  justify-items: start;
`;
const Clip = styled(PButton)`
  justify-content: flex-end;
  padding-right: 3px;
  border-radius: 0 5px 5px 0;
`;
const KeyTools = styled.div`
  display: flex;
  align-items: center;
  gap: 4px;
`;
const Plugin = styled.aside`
  width: 103px;
  flex: none;
  padding-top: 3px;
  overflow: hidden;
  position: relative;
  display: flex;
  flex-direction: column;
`;
const PluginBody = styled.div`
  flex: 1;
  min-height: 0;
  margin: 6px 0 0 0;
  padding: 2px 0 0 2px;
  border-top: 1px solid #8d8d8d;
  border-left: 2px solid #8d8d8d;
  overflow: hidden;
  display: flex;
  flex-direction: column;
`;
const PluginGrid = styled.div`
  display: grid;
  grid-template-columns: 65px 65px;
  column-gap: 5px;
`;
const PluginCol = styled.div`
  display: flex;
  flex-direction: column;
  gap: 6px;
  & > * { flex: none; justify-content: center; }
  & > :nth-child(4n + 3) { height: 22px; }
`;
const PluginRow = styled.div<{ $mt: number }>`
  display: flex;
  gap: 5px;
  margin-top: ${(p) => p.$mt}px;
  flex: none;
`;
const UnitRow = styled.div`
  display: flex;
  align-items: flex-start;
  height: 37px;
  margin-top: 8px;
  padding-left: 5px;
  gap: 4px;
  color: #fff;
`;
const LogoButton = styled.button`
  width: 86px;
  height: 66px;
  margin-left: 8px;
  border-radius: 5px;
  flex: none;
  && { background: ${FIELD}; }
  display: grid;
  place-items: center;
`;
const LogoArt = styled.span`
  display: flex;
  justify-content: center;
  width: 76px;
  height: 58px;
  background: #fff;
  font: italic 700 62px/58px "Liberation Serif", serif;
  text-shadow: 2px 2px 0 #666;
  b { color: #4646e6; }
  i { color: #f08028; margin-left: -8px; }
`;
const Brand = styled.a`
  margin: 6px 0 0 22px;
  color: #0000f0;
  text-decoration: none;
  line-height: 20px;
  font-weight: 400;
`;
const FloatCube = styled.button<{ $y: number }>`
  position: absolute;
  left: 34px;
  top: ${(p) => p.$y}px;
  width: 28px;
  height: 26px;
  && { background: #3c3c3c; }
`;

/* ---------- floating widgets ---------- */
const Recorder = styled.div`
  position: absolute;
  left: 10px;
  bottom: 27px;
  width: 42px;
  height: 185px;
  background: #3a3a3a;
  border: 1px solid #333;
  overflow: hidden;
  display: flex;
  flex-direction: column;
  align-items: center;
`;
const RecButton = styled.button<{ $on?: boolean }>`
  flex: none;
  width: 38px;
  height: 38px;
  margin-bottom: 2px;
  border-radius: 4px;
  display: grid;
  place-items: center;
  && { background: ${(p) => (p.$on ? "#2d2d2d" : "none")}; }
`;
const Chip = styled.div`
  position: absolute;
  left: 0;
  bottom: 0;
  width: 63px;
  height: 27px;
  background: #fff;
  display: flex;
  align-items: center;
  padding-left: 4px;
`;
const Mascot = styled.svg`
  position: absolute;
  right: 162px;
  bottom: 0;
`;

/* ---------- scene data (facade units: 2.45 by 3 per pixel) ---------- */
const COLS: [number, number][] = [[99, 121], [146, 185], [231, 281], [344, 395], [460, 510], [562, 604], [675, 697], [727, 749], [793, 812], [844, 868], [915, 967], [1020, 1070]];
const DOORS: [number, number][] = [[359, 381], [621, 643], [1079, 1101], [1231, 1251]];
const ROWS1: [number, number][] = [[65, 97], [128, 163], [193, 250], [280, 338]];
const ROWS2: [number, number][] = [[580, 616], [646, 679], [709, 766], [796, 856]];
const ROWS3: [number, number][] = [[1060, 1096], [1127, 1159], [1189, 1248], [1276, 1336]];
const hasWindow = (c: number, r: number) => !(r === 3 && (c === 3 || c === 8 || c === 9));
const openings = (rows: [number, number][], door: [number, number], cols: number[]) => {
  const out: number[][] = [];
  cols.forEach((c) => rows.forEach((r, i) => hasWindow(c, i) && out.push([COLS[c][0], r[0], COLS[c][1], r[1]])));
  DOORS.forEach((d) => out.push([d[0], door[0], d[1], door[1]]));
  return out;
};
const ALL = COLS.map((_, i) => i);
const box = (b: number[]) => `M${b[0]} ${b[1]}H${b[2]}V${b[3]}H${b[0]}z`;
const o1 = openings(ROWS1, [298, 354], ALL);
const o2 = openings(ROWS2, [814, 871], ALL);
const C3 = [1, 3, 5, 6, 7, 8, 9, 10, 11];
const o3 = openings(ROWS3, [1295, 1351], C3);

const FAN = [
  "M85 50 99 65M85 50 320 65 1455 50M85 50 1070 65M85 50 99 163V338M85 50 88 362M160 50 1455 52M320 62H1300L1455 50M400 63 1200 56",
  "M121 97 146 128M185 128 231 65M99 97H146V128H121M146 97H231M281 128 344 97M281 97H344V128M344 97 180 193M395 97H1070M121 128H146M121 163H185V193M344 163V193M395 97V193",
  "M88 362 121 280 344 97M88 362 146 193M88 362 146 163 231 65M88 362 185 250 231 210M88 362 185 280 231 250M88 362 281 212 344 163M88 362 231 310M88 362 121 300 185 228M88 362 185 322 231 306M281 280 344 250M88 362 146 340M105 250 112 280M253 193 344 97M99 338 88 362M185 163 170 193",
  "M344 250 359 298M395 250 381 298M344 250H395M395 250 460 280M395 250 1020 310 1457 362M395 250 562 282 1455 362M395 250 1231 330M395 163 460 193M395 163 562 190M395 163 675 203 1457 362M395 163 727 228 915 258 1457 362M395 97 460 128M395 97 562 138 1457 362",
  "M604 150 1457 362M604 97 675 128M604 97 727 134 1457 362M604 200 1020 285 1457 362M697 97 793 128 1457 362M749 97 844 128 1457 362M812 97 915 137 1457 362M868 97 1020 163 1457 362M967 97 1020 132 1457 362M1070 97 1457 362M1070 155 1457 362M1070 205 1457 362M1070 230 1457 362M1070 250 1457 362",
  "M697 285 1457 362M749 212 1020 270 1457 362M868 210 1457 362M967 240 1457 362M1070 318 1457 362M1101 325 1457 362M1101 340 1457 362M967 310 1020 325M85 360 359 354 1231 358M85 363 1457 360M381 354 460 338H621M381 354 600 340 1079 350 1455 362M643 340 1079 350M250 360H1457M85 358 1251 354",
];
const full = (top: number, bottom: number, cols: number[]) =>
  [...cols.map((c) => COLS[c]), ...DOORS.slice(1)].map((c) => `M${c[0]} ${top}V${bottom}M${c[1]} ${top}V${bottom}`).join("");

const Facades = () => (
  <g transform="translate(640 390) scale(.40816 .33333)" strokeWidth="1" fill="none">
    <g stroke="#86690a">
      <path d="M84 49H1457V364H84z" fill="#bfb156" vectorEffect="non-scaling-stroke" />
      {FAN.map((d, i) => <path key={i} d={d} vectorEffect="non-scaling-stroke" />)}
      <path d="M1100 49H1457L1070 64z" fill="#86690a" stroke="none" />
      {o1.map((b, i) => <path key={i} d={box(b)} fill="#2d2d2d" vectorEffect="non-scaling-stroke" />)}
    </g>
    <g stroke="#86690a">
      <path d="M84 566H1457V881H84z" fill="#bfb156" vectorEffect="non-scaling-stroke" />
      <path d={full(566, 881, ALL.filter((c) => c !== 3 && c !== 8 && c !== 9)) + "M344 566V881M395 566V881M793 566V881M868 566V881M812 580V881M844 580V766M359 796V881M381 796V881M344 796H395M793 580H868M793 616H868M793 646H868M793 679H868M793 709H868M793 766H868M1070 580H1079M1070 616H1079M1070 646H1079M1070 679H1079M1070 709H1079M1070 766H1079M1070 796H1079M1070 856H1079"} vectorEffect="non-scaling-stroke" />
      {o2.map((b, i) => <path key={i} d={box(b)} fill="#3a3a3a" vectorEffect="non-scaling-stroke" />)}
    </g>
    <g stroke="#fff">
      <path d="M81 1044H1458V1365H81z" fill="#bfb156" stroke="#3ff" strokeWidth="2" vectorEffect="non-scaling-stroke" />
      <path d={"M85 1047H1456V1362H85z" + full(1047, 1362, C3) + "M344 1295H395M344 1351H395"} vectorEffect="non-scaling-stroke" />
      {o3.map((b, i) => <path key={i} d={box(b)} vectorEffect="non-scaling-stroke" />)}
      {o3.map((b, i) => <path key={i} d={box([b[0] + 4, b[1] + 4, b[2] - 4, b[3] - 4])} fill="#444" stroke="#3ff" strokeWidth="2" vectorEffect="non-scaling-stroke" />)}
    </g>
    <path d="M749 1177H791V1228H749z" stroke="#aaa27a" vectorEffect="non-scaling-stroke" />
    <path d="M770 933V1131" stroke="#ff0" vectorEffect="non-scaling-stroke" />
    <path d="M770 840 785 933H755z" fill="#009000" />
    <path d="M770 1081H871" stroke="#00a000" vectorEffect="non-scaling-stroke" />
    <path d="M871 1081V1205M831 1205H1076" stroke="#c00000" vectorEffect="non-scaling-stroke" />
    <path d="M992 1185 1066 1205 992 1224z" fill="#b60000" />
  </g>
);

const Outline = styled.text`
  font: 200 114px "Noto Sans CJK SC", sans-serif;
  fill: none;
  stroke: #e9a5e0;
  stroke-width: 1px;
`;
const AxisName = styled.text`
  font: 700 16px "Liberation Sans", sans-serif;
`;

const menus: [string, string?][] = [["文件", "F"], ["编辑", "E"], ["工具", "T"], ["组", "G"], ["视图", "V"], ["创建", "C"], ["修改器", "M"], ["动画", "A"], ["图形编辑器", "D"], ["渲染", "R"], ["自定义", "U"], ["脚本", "S"], ["V-Ray"], ["Civil View"], ["帮助", "H"], ["Arnold"], ["Substance"], ["D5"]];
const side = ["渲染", "文件", "编辑", "选择", "显示", "变换", "动画", "模型", "室内", "室外", "图形", "材质"];
const col1 = ["选择转换", "场景转换", "塌陷合并", "塌陷多维", "选择按材", "场景按组", "按材质炸", "按体炸", "按等体炸"];
const col2 = ["视图转换", "选择转换", "HFI", "属性转换", "MRS", "堆栈塌陷", "组", "装载脚本", "塌陷物体", "图形转换", "材质转换", "清理场景", "修改转换", "工具合集", "高级工具", "其它工具"];
const pairs = [["Breake", "Extrude"], ["Weld", "T Weld"], ["Connect", "Chamfer"], ["Bridge", "Cut"], ["SlicePla", "Slice"], ["Flip", "Cap"], ["Attach", "Detach"], ["Insert", ""]];

const CubeFrame = () => (
  <svg width="28" height="26" viewBox="0 0 28 26">
    <path d="M5 8V4h5M18 4h5v4M5 19v4h5" fill="none" stroke={L} strokeWidth="1.500" />
    <g transform="translate(6 5) scale(.54)"><CubeShape /></g>
    <path d="M27 21v5h-5z" fill="#eee" />
  </svg>
);

const ToolArea = () => (
  <Toolbars>
    <ToolRow>
      <Grip $w={11} /><B n="explorer" />
      <Combo label="层" value="0  (默认)" w={259} top pad={66}>
        <Lead>
          <svg width="66" height="14" viewBox="0 0 66 14"><path d="M0 7h12M16 7h12" stroke="#999" strokeWidth="3" /><g transform="translate(33 1) scale(.46)"><Pot c="#e8e8e8" /></g><path d="M53 2h9v9h-9z" fill="#5f93e0" stroke="#000" /></svg>
        </Lead>
      </Combo>
      <Spacer $w={1} />
      <Row of="layerAdd layerDown sel layerSel" /><Grip /><Row of="layers layersDim" />
      <DimCombo><input aria-label="启用层" defaultValue="(启用层)" disabled /><svg width="8" height="7" viewBox="0 0 8 7"><path d="M0 0H8L4 7z" fill="#e4e4e4" /></svg></DimCombo>
      <Spin $w={64} $h={24} $c="#858585" $bg="#505050"><input aria-label="不透明度" defaultValue="100.0" /><UpDown c="#888" /></Spin>
      <Row of="layerGear dAdd dTrash dDoc dPaste dAddPaste dMerge dX" /><Grip />
      <B n="mGrid" on /><B n="mAxis" /><B n="mPoint" on /><B n="mEnd" on /><B n="mMid" on /><B n="mTri" /><B n="mTriF" />
      <Sep /><B n="mSnow" on /><B n="mXY" on /><Grip />
      <TextButton><Txt t="新建(N)..." /></TextButton><TextButton><Txt t="打开(O)..." /></TextButton>
      <B n="save" /><B n="sGear" />
    </ToolRow>
    <ToolRow>
      <Grip $w={11} /><Combo label="项目路径" value="C:\Users\86…ds Max 202" w={220} h={36} pad={6} mono /><Spacer $w={1} />
      <B n="sGear" w={38} /><B n="sFolder" w={38} /><B n="sTree" w={38} /><B n="sNode" w={38} /><Grip />
      <Row of="gridA ruler" /><Sep /><B n="ring" fly /><Grip $w={11} /><Row of="link unlink bind" /><Grip $w={13} />
      <B n="potGear" /><B n="potBolt" fly /><Grip /><B n="braces" />
      <Combo label="选择集" value="创建选择集" w={150} h={23} top pad={2} /><Grip />
      <Combo label="过滤" value="全部" w={86} h={23} top pad={6} />
      <B n="sel" /><B n="selName" /><B n="region" fly /><B n="cross" /><Sep $w={8} /><B n="manip" /><Sep $w={8} /><Grip />
      <Row of="undo redo" /><Grip />
      <B n="X" /><B n="Y" on /><B n="Z" /><B n="ZX" fly /><B n="mXY" on /><Grip $w={19} />
      <B n="move" on /><B n="rotate" /><B n="scale" fly /><B n="place" fly />
      <Combo label="参考坐标系" value="视图" w={86} h={23} top pad={6} /><B n="pivot" fly />
    </ToolRow>
    <ToolRow>
      <Grip $w={11} /><B n="pot" fly /><B n="cloud" dark /><B n="winCube" /><Sep $w={10} /><Row of="bulb camList" /><Sep $w={10} /><B n="camera" /><Sep $w={10} />
      <Row of="lightPlane dome ball ico disc spot sun burst" /><Sep $w={10} />
      <Row of="cubeCut ballCut tower instances grass fire" /><Sep $w={10} />
      <B n="sphere" fly /><Row of="four holes ballBox" /><Sep $w={10} /><Row of="convert vray" /><Grip $w={10} />
      <Row of="dPaint dBrush dot1 dot2 dot3 dot4 dot5" /><Spacer $w={36} /><Grip $w={10} />
      <B n="mirror" /><B n="ring" fly />
      <svg width="8" height="30" viewBox="0 0 8 30"><path d="M6.500 1V29" stroke={T} strokeDasharray="6 2" /></svg><Grip />
      <B n="explorer" /><Sep /><Row of="curve down" /><Sep /><B n="matEd" fly /><Grip />
      <B n="saveClock" on /><Row of="nine history" />
    </ToolRow>
    <ToolRow>
      <Grip $w={11} /><Row of="undo redo" /><Sep /><Row of="link unlink bind" /><Sep />
      <Combo label="选择过滤器" w={86} top /><B n="sel" /><B n="selName" /><B n="region" fly /><B n="cross" /><Sep $w={8} />
      <B n="move" /><B n="rotate" /><B n="scale" fly /><B n="place" fly /><Combo label="坐标" w={86} top /><B n="pivot" fly /><Sep $w={8} />
      <B n="manip" /><B n="keyb" on /><Sep $w={8} />
      <B n="snap25" fly /><Row of="snapA snapP snapS" /><Sep /><B n="braces" />
      <Combo label="命名选择集" w={148} top /><Sep $w={8} /><B n="mirror" /><B n="align" fly /><Sep />
      <Row of="list explorer" /><Sep /><B n="ribbon" on /><Row of="curve down" /><Sep /><B n="matEd" fly /><Sep /><Row of="potGear potWin" /><B n="potBolt" fly />
    </ToolRow>
  </Toolbars>
);

const Viewport = () => (
  <View>
    <Scene width="1369" height="682" viewBox="57 270 1369 682">
      <Outline x="280" y="493">方案一</Outline>
      <Outline x="280" y="679">方案二</Outline>
      <Outline x="280" y="869">方案三</Outline>
      <Facades />
      <AxisName x="953" y="669" fill="#e8e800">y</AxisName>
      <AxisName x="1078" y="794" fill="#b00000">x</AxisName>
      <path d="M81.500 900V924" stroke="#0000c8" />
      <path d="M82 924.500H107" stroke="#b00000" />
      <AxisName x="81" y="903" fill="#0000c8">z</AxisName>
      <AxisName x="106" y="929" fill="#b00000">x</AxisName>
      <AxisName x="81" y="928" fill="#108010">y</AxisName>
    </Scene>
    <ViewLabels>
      <span>[+]</span><span>[前 ]</span><span>[标准 ]</span><span>[边面 ]</span>
      <svg width="17" height="17" viewBox="0 0 17 17"><rect width="17" height="17" rx="2" fill="#484848" /><path d="M2 2H15L10 9V15H7V9z" fill="#5a5a5a" stroke="#333" /></svg>
    </ViewLabels>
    <Stats>
      <thead><tr><th /><th>总计</th><th>图形007</th></tr></thead>
      <tbody>
        <tr><th>多边形:</th><td>2,097</td><td>214</td></tr>
        <tr><th>顶点:</th><td>10,335</td><td>348</td></tr>
        <tr><td /></tr>
        <tr><th>FPS:</th><th>不活动</th></tr>
      </tbody>
    </Stats>
  </View>
);

const StatusBar = () => (
  <Status>
    <Listener>
      <ListenerLine aria-label="宏录制器" />
      <ListenerLine aria-label="脚本侦听器" defaultValue="代码说明:1" />
    </Listener>
    <StatusText>
      <Txt t="选择了 1 个 对象" />
      <Txt t="单击并拖动以选择并移动对象" />
    </StatusText>
    <StatusMid>
      <StatusLine>
        <ToolTiny aria-label="孤立" $bg={BLUE}><svg width="22" height="22" viewBox="0 0 22 22"><path d="M2 7V2h5M15 2h5v5M2 15v5h5M15 20h5v-5" fill="none" stroke={L} strokeWidth="2" /><path d="M7 6h8v10H7z" fill={T} stroke={BG} /></svg></ToolTiny>
        <ToolTiny aria-label="锁定" $m="0 0 0 4px"><svg width="14" height="20" viewBox="0 0 14 20"><path d="M3 9V5a4 4 0 0 1 8 0v4" fill="none" stroke={L} strokeWidth="2" /><rect x="1" y="8" width="12" height="11" fill={L} /><path d="M7 11v5" stroke={BG} strokeWidth="2.500" /></svg></ToolTiny>
        <ToolTiny aria-label="绝对模式" $m="0 1px 0 4px"><svg width="17" height="17" viewBox="0 0 17 17"><path d="M1 1H16V16H1z" fill="none" stroke={L} strokeWidth="2" /><circle cx="8.500" cy="8.500" r="3" fill="none" stroke={L} strokeWidth="2" /><path d="M3 3l3 3M14 3l-3 3M3 14l3-3M14 14l-3-3" stroke={L} strokeWidth="2" /></svg></ToolTiny>
        <Txt t="X:" /><Spin $w={85} $h={22}><input aria-label="X" defaultValue="-0.055m" /><UpDown /></Spin>
        <Txt t="Y:" /><Spin $w={85} $h={22}><input aria-label="Y" defaultValue="-4.042m" /><UpDown /></Spin>
        <Txt t="Z:" /><Spin $w={85} $h={22}><input aria-label="Z" defaultValue="-12.158m" /><UpDown /></Spin>
        <Txt t="栅格 = 10.0m" />
      </StatusLine>
      <StatusLine $pl={237}>
        <Sep $w={6} />
        <ToolTiny aria-label="安全" $bg={FIELD} $w={24}><svg width="16" height="18" viewBox="0 0 16 18"><path d="M8 1q3 2 6 2 1 10-6 14Q1 13 2 3q3 0 6-2z" fill={L} /><path d="M8 3v6h5q0-2 0-4-3 0-5-2zM8 9v6Q4 12 3 9z" fill={BG} /></svg></ToolTiny>
        <Spacer $w={2} /><Txt t="禁用:" />
        <svg width="18" height="12" viewBox="0 0 18 12"><circle cx="10" cy="6" r="5" fill="#ff5555" /></svg>
        <ToolTiny aria-label="自适应降级" $bg={FIELD} $w={24}><svg width="18" height="18" viewBox="0 0 18 18"><circle cx="9" cy="9" r="8.500" fill="#eee" /><text x="9" y="14" textAnchor="middle" fontFamily="Roboto" fontWeight="700" fontSize="13" fill="#333">0</text></svg></ToolTiny>
        <Sep $w={8} />
        <ToolTiny aria-label="时间标记" $bg={BLUE}><svg width="18" height="18" viewBox="0 0 30 30"><path d="M15 2 27 8V22L15 28 3 22V8zM3 8l12 6 12-6M15 14v14M15 2v12M3 22l12-8 12 8" fill="none" stroke={L} strokeWidth="2.400" /></svg></ToolTiny>
        <Txt t="添加时间标记" />
      </StatusLine>
    </StatusMid>
    <Player>
      <svg width="95" height="32" viewBox="0 0 95 32"><g fill={L}><path d="M0 9h2v14H0zM9 10v12l-6-6zM18 10v12l-7-6zM41 9v14l-9-7zM42 9h2v14h-2zM46 9h3v14h-3zM60 7v18l16-9zM87 9h3v14h-3zM92 9h3v14h-3z" /><path d="M79 24v5h-5z" fill="#fff" /></g><path d="M24.500 6V26" stroke="#111" /></svg>
      <Line $g={0}>
        <svg width="26" height="20" viewBox="0 0 26 20"><path d="M7 5v10l-6-5zM10 5v10l6-5z" fill={L} /><path d="M24.500 0V20" stroke="#111" /></svg>
        <PlayerField aria-label="当前帧" defaultValue="0" />
      </Line>
    </Player>
  </Status>
);

const WithTail = ({ t, tail = "" }: { t: string; tail?: string }) => (
  <Line><PButton><Txt t={t} /></PButton><PButton $w={8} aria-label={t + " 选项"}><Txt t={tail} /></PButton></Line>
);

const NaviPanel = () => (
  <Navi>
    <Dots $m="0 -1px 0 -3px" />
    <NaviHead><Txt t="AutoNaviTToo" /><PButton $w={16} $h={16}><Txt t="x" /></PButton></NaviHead>
    <Lines>
      <Line><PButton><Txt t="物体命名" /></PButton><svg width="25" height="23" viewBox="0 0 25 25" preserveAspectRatio="none"><path d="M0 0H25V25H0z" fill="#5c5c5c" /><path d="M0 0H9L3 6 1 14 0 14zM0 18H13V25H0zM18 2h7v8h-5z" fill="#ccc" /></svg></Line>
      <WithTail t="优化材质" tail="v" />
      <WithTail t="** 优化材质 **" tail="v" />
      <WithTail t="命名材质贴图" />
      <WithTail t="清除光滑组" />
      <WithTail t="游离点和空物体" />
      <WithTail t="清空材质球" />
      <Line><PButton $w={64}><Txt t="坐标归零" /></PButton><PButton><Txt t="中" /></PButton><PButton><Txt t="底" /></PButton><PButton $w={8} aria-label="选项" /></Line>
      <WithTail t="材质贴图检查" />
      <WithTail t="导出USX" />
    </Lines>
    <Groove />
    <Lines>
      <WithTail t="焊点" />
      <WithTail t="展UV" />
      <Line><PButton><Txt t="去除贴图" /></PButton></Line>
      <Line><PButton><Txt t="选择无贴图的面" /></PButton></Line>
      <Line><PButton><Txt t="选择同ID的面" /></PButton></Line>
    </Lines>
    <Line $g={4} $mt={5}>
      <PButton $w={18} $h={18}><Txt t="?" /></PButton><PButton $w={11} $h={18}><Txt t="<" /></PButton>
      <PButton $w={18} $h={18} aria-label="锁"><svg width="14" height="16" viewBox="0 0 14 16"><path d="M3 8V4a4 4 0 0 1 8 0v4" fill="none" stroke="#eee" strokeWidth="2" /><path d="M1 7H13V16H1z" fill="#e8cda5" /><path d="M7 9v4" stroke="#222" strokeWidth="2.400" /></svg></PButton>
      <PButton $w={11} $h={18} $on><Txt t=">" /></PButton><PButton $h={18}><Txt t=">>>>>" /></PButton>
    </Line>
    <Line $g={4} $mt={4}>{["1", "2", "3", "4"].map((n) => <PButton key={n}><Txt t={n} /></PButton>)}</Line>
    <Line $mt={5}><PButton $h={6}><Txt t="v" s={10} /></PButton></Line>
    <Lines $mt={4}>
      {pairs.map(([a, b]) => <Line key={a} $g={4}><PButton><Txt t={a} /></PButton><PButton aria-label={b || "空"}><Txt t={b} /></PButton></Line>)}
    </Lines>
    <Line $g={3} $mt={5}><PButton><Txt t="C" /></PButton><PButton><Txt t="P" /></PButton><PButton aria-label="a"><svg width="22" height="22" viewBox="0 0 22 22"><path d="M0 0H22V22H0z" fill="#bbb" /><path d="M5 5l4 4M12 4q6 0 6 6" stroke={BG} strokeWidth="2" fill="none" /></svg></PButton><PButton aria-label="b"><svg width="22" height="22" viewBox="0 0 22 22"><path d="M0 0H22V22H0z" fill="#bbb" /><path d="M2 8h18M6 4 2 8l4 4M16 4l4 4-4 4" stroke={BG} strokeWidth="2" fill="none" /></svg></PButton><PButton aria-label="c"><svg width="22" height="22" viewBox="0 0 22 22"><path d="M0 0H22V22H0z" fill="#bbb" /><path d="M11 3v16M7 7l4-4 4 4" stroke={BG} strokeWidth="2" fill="none" /></svg></PButton></Line>
    <Tag>间标记</Tag>
  </Navi>
);

const tabIcons = [
  <path key="a" d="M15 6V25M5 15.500H25" stroke="#a0a0a0" strokeWidth="4" />,
  <g key="b" fill="none" stroke={T} strokeWidth="2"><path d="M6 6H24V24H6z" /><path d="M8 23Q9 9 22 7" stroke={L} /><g fill={BG}><path d="M4 4h4v4H4zM22 4h4v4h-4zM4 22h4v4H4zM22 22h4v4h-4z" /></g></g>,
  <g key="c"><path d="M7 5H23V12H7z" fill="#a0a0a0" /><path d="M15 12v4M9 21v-4H21v4" stroke="#3d8585" strokeWidth="1.500" fill="none" /><path d="M5 21h9v5H5zM17 21h8v5h-8z" fill="#3d8585" /></g>,
  <g key="d"><circle cx="18" cy="15" r="8.500" fill="#a0a0a0" /><path d="M9 7q-7 8 0 17M13 6q-8 9 0 19" fill="none" stroke="#3d8585" strokeWidth="1.600" /></g>,
  <path key="e" d="M5 7H25V19H5zM12 21h6v2h3v2H9v-2h3z" fill="#a0a0a0" />,
  <path key="f" d="M5 9a5 5 0 0 0 7 3L22 23l3-2L14 10a5 5 0 0 0-5-5v4L8 10z" fill="#a0a0a0" stroke="#a0a0a0" />,
];

const CommandPanel = () => (
  <Command>
    <Dots $m="0 3px 0 2px" />
    <Tabs>
      {tabIcons.map((t, i) => <Tab key={i} aria-label={["创建", "修改", "层次", "运动", "显示", "实用程序"][i]} $on={i === 1}><svg width="30" height="30" viewBox="0 0 30 30">{t}</svg></Tab>)}
    </Tabs>
    <NameRow><NameField aria-label="对象名称" defaultValue="图形007" /><Swatch aria-label="对象颜色" /></NameRow>
    <Line $g={0} $mt={7}><Spacer $w={4} /><Combo label="修改器列表" value="修改器列表" w={233} h={23} pad={3} /></Line>
    <ModGrid>
      <PButton $h={22}><Txt t="FFD 2x2x2" /></PButton><PButton $h={22} $off><Txt t="挤出" /></PButton>
      <PButton $h={22} $off><Txt t="扫描" /></PButton><PButton $h={22}><Txt t="多边形选择" /></PButton>
      <PButton $h={22}><Txt t="体积选择" /></PButton><PButton $h={22} $off><Txt t="FFD 选择" /></PButton>
      <PButton $h={22} $off><Txt t="曲面选择" /></PButton>
    </ModGrid>
    <StackBox><StackRow><svg width="6" height="9" viewBox="0 0 6 9"><path d="M0 0V9L6 4.500z" fill="#eee" /></svg><span>可编辑多边形</span></StackRow></StackBox>
    <StackTools>
      <svg width="24" height="24" viewBox="0 0 24 24"><path d="M4 21 10 14" stroke={L} strokeWidth="1.600" /><path d="M13 4l7 6-2 1-4 4-1 4-7-6 3-1 4-4z" fill={L} /></svg>
      <Spacer $w={4} /><Sep /><Spacer $w={5} />
      <svg width="24" height="24" viewBox="0 0 24 24"><path d="M8 1h8M9.500 2V22h5V2" fill="none" stroke={L} strokeWidth="1.600" /><path d="M12 11v10" stroke={T} strokeWidth="3" /></svg>
      <Spacer $w={6} /><Sep /><Spacer $w={5} />
      <svg width="26" height="26" viewBox="0 0 26 26"><g fill="none" stroke={K} strokeWidth="1.600"><circle cx="7" cy="7" r="5" /><circle cx="12" cy="19" r="5.500" /><circle cx="18" cy="18" r="6" /><path d="M13 7h7v5M17 9l3 4 3-4" /></g></svg>
      <Spacer $w={4} />
      <svg width="26" height="26" viewBox="0 0 26 26"><path d="M5 3H21V6H5zM7 8H20V24H7zM11 10v12M14 10v12M17 10v12" fill="none" stroke={K} strokeWidth="1.800" /></svg>
      <Spacer $w={5} /><Sep /><Spacer $w={4} />
      <svg width="26" height="26" viewBox="0 0 26 26"><path d="M2 2H20V24H2z" fill={L} /><path d="M4 7h6M4 10h6v5H4zM13 10h5v5h-5zM4 18h6v4H4zM13 18h5v4h-5zM4 5h8" fill="none" stroke={BG} strokeWidth="1.400" /><path d="M13 13 23 3" stroke={BG} strokeWidth="5" /><path d="M14 12 24 2" stroke={O} strokeWidth="3" /></svg>
    </StackTools>
    <Splitter><i /><svg width="13" height="3" viewBox="0 0 13 3"><path d="M0 .5H13M0 2.500H13" stroke="#bbb" strokeDasharray="1 1" /></svg><i /></Splitter>
    <Rollouts>
      <Rollout>
        <RollHead><svg width="8" height="6" viewBox="0 0 8 6"><path d="M0 0H8L4 6z" fill="#bbb" /></svg>选择<svg width="8" height="8" viewBox="0 0 8 8"><path d="M0 .5H8M0 2.500H8M0 4.500H8M0 6.500H8" stroke="#888" strokeDasharray="1 1" /></svg></RollHead>
        <SubObj>
          <button aria-label="顶点"><svg width="20" height="20" viewBox="0 0 20 20"><circle cx="3" cy="10" r="2" fill={T} /><circle cx="16" cy="3" r="2" fill={T} /><circle cx="13" cy="17" r="2" fill={T} /></svg></button>
          <button aria-label="边"><svg width="20" height="20" viewBox="0 0 20 20"><path d="M2 11 18 2 15 18z" fill="none" stroke={T} strokeWidth="1.600" /></svg></button>
          <button aria-label="边界"><svg width="20" height="20" viewBox="0 0 20 20"><path d="M4 2q13-2 14 8-1 8-13 8 8-4 2-8-5-5-3-8z" fill="none" stroke={T} strokeWidth="1.600" /></svg></button>
          <button aria-label="多边形"><svg width="20" height="20" viewBox="0 0 20 20"><path d="M3 3H17V17H3z" fill={T} /></svg></button>
          <button aria-label="元素"><svg width="20" height="20" viewBox="0 0 30 30"><CubeShape /></svg></button>
        </SubObj>
        <Line $mt={7}><Spacer $w={9} /><Check><input type="checkbox" disabled />按顶点</Check></Line>
        <Line $mt={4} />
        <Group $h={50}><legend>可选消隐</legend><PButton $h={21} $off $flat><Txt t="背面" /></PButton><PButton $h={21} $off $flat><Txt t="阻挡" /></PButton></Group>
        <Line $mt={5} $g={3}><Spacer $w={6} /><Check><input type="checkbox" disabled /><Txt t="按角度:" /></Check><Spin $w={95} $h={20} $c="#8b8b8b" $bg="#555"><input aria-label="角度" defaultValue="45.0" disabled /><UpDown c="#999" /></Spin></Line>
        <Line $mt={4} $g={9}><Spacer $w={1} /><PButton $w={82} $h={21} $off $flat>收缩</PButton><PButton $w={82} $h={21} $off $flat>扩大</PButton></Line>
        <Line $mt={6} $g={5}><Spacer $w={5} /><PButton $w={65} $h={21} $off $flat>环形</PButton><Spin $w={14} $h={20} $bg="#505050"><span /><UpDown c="#999" /></Spin><PButton $w={65} $h={21} $off $flat>循环</PButton><Spin $w={14} $h={20} $bg="#505050"><span /><UpDown c="#999" /></Spin></Line>
        <Line $mt={4} />
        <Group $h={50}><legend>预览选择</legend><Radio><input type="radio" name="preview" />禁用</Radio><Radio><input type="radio" name="preview" />子对象</Radio><Radio><input type="radio" name="preview" />多个</Radio></Group>
      </Rollout>
      <Track />
    </Rollouts>
    <Keys>
      <Clip $w={66} $h={24}><Txt t="自动   " /></Clip>
      <Combo label="关键点对象" value="选定对象" w={140} h={22} pad={4} />
      <svg width="22" height="24" viewBox="0 0 22 24"><circle cx="13" cy="9" r="6" fill="none" stroke={L} strokeWidth="2.400" /><path d="M9 14 2 21" stroke={L} strokeWidth="3" /></svg>
      <Clip $w={66} $h={24}>设置关键点</Clip>
      <KeyTools>
        <svg width="26" height="24" viewBox="0 0 26 24"><path d="M4 21Q9 19 10 4M22 21Q17 19 16 4" fill="none" stroke={T} strokeWidth="2.600" /><path d="M4 4H22" stroke={L} strokeWidth="1.200" /><path d="M11 2h4v4h-4z" fill={BG} stroke={L} /><circle cx="5" cy="4" r="2" fill={L} /><circle cx="21" cy="4" r="2" fill={L} /><path d="M26 19v5h-5z" fill="#eee" /></svg>
        <PButton $w={106} $h={24}><Txt t="过滤器..." /></PButton>
      </KeyTools>
      <svg width="22" height="24" viewBox="0 0 22 24"><path d="M2 4H21V18H2z" fill="none" stroke={L} strokeWidth="1.500" strokeDasharray="3 2" /><circle cx="12" cy="11" r="5" fill={BG} stroke={T} strokeWidth="2" /><path d="M8 15l-5 5" stroke={T} strokeWidth="2.400" /></svg>
    </Keys>
  </Command>
);

const PluginPanel = () => (
  <Plugin>
    <Dots $m="0 3px 0 2px" />
    <PluginBody>
      <PluginGrid>
        <PluginCol>{col1.map((t) => <PButton key={t} $w={65}><Txt t={t} /></PButton>)}</PluginCol>
        <PluginCol>{col2.map((t, i) => <PButton key={t} $w={t.length < 4 ? 30 : 65} $on={i === 8}><Txt t={t} /></PButton>)}</PluginCol>
      </PluginGrid>
      <PluginRow $mt={117}>{["A", "B", "C"].map((t) => <PButton key={t} $w={30} $h={16}><Txt t={t} /></PButton>)}</PluginRow>
      <UnitRow>
        <svg width="26" height="34" viewBox="0 0 26 34"><path d="M0 2H15" stroke="#777" /><path d="M8 18V11h2v7h1V8h2v10h1V7h2v11h1V10h2v14q-3 5-8 5-4 0-8-8 2-2 4 1z" fill="#ddd" stroke="#ddd" /><path d="M26 28v5h-5z" fill="#eee" /></svg>
        <Txt t="I" /><Combo label="单位" value="米" w={52} h={21} pad={5} />
      </UnitRow>
      <LogoButton aria-label="AK"><LogoArt><b>A</b><i>K</i></LogoArt></LogoButton>
      <Brand href="#">酷意培训</Brand>
      <PluginRow $mt={7}>{["设置", "卸载", "帮助"].map((t) => <PButton key={t} $w={31}>{t}</PButton>)}</PluginRow>
    </PluginBody>
    <FloatCube aria-label="视图立方体" $y={590}><CubeFrame /></FloatCube>
    <FloatCube aria-label="导航立方体" $y={691}><CubeFrame /></FloatCube>
  </Plugin>
);

export default function App() {
  return (
    <Shell>
      <Global />
      <Paints width="0" height="0">
        <defs>
          <radialGradient id="sph" cx=".35" cy=".3" r=".8"><stop offset="0" stopColor="#e6e6e6" /><stop offset="1" stopColor="#707070" /></radialGradient>
          <radialGradient id="soft"><stop offset="0" stopColor="#828282" /><stop offset="1" stopColor="#828282" stopOpacity="0" /></radialGradient>
          <radialGradient id="soft2"><stop offset="0" stopColor="#7c7c7c" /><stop offset=".6" stopColor="#606060" /><stop offset="1" stopColor="#464646" /></radialGradient>
          <radialGradient id="soft3"><stop offset="0" stopColor="#7c7c7c" /><stop offset=".7" stopColor="#6c6c6c" /><stop offset="1" stopColor="#5a5a5a" /></radialGradient>
        </defs>
      </Paints>
      <TitleBar>
        <svg width="18" height="20" viewBox="0 0 18 20"><rect x="1" width="17" height="15" rx="1" fill="#2f9fc6" /><path d="M0 3 3 0V18H0zM3 14H18V20H1z" fill="#1b6480" /><text x="10" y="11" textAnchor="middle" fontFamily="Roboto" fontWeight="700" fontSize="12" fill="#fff">3</text><text x="10" y="19" textAnchor="middle" fontFamily="Roboto" fontWeight="700" fontSize="5" fill="#fff">MAX</text></svg>
        ( m + ScanLine ) - Autodesk 3ds Max 2023
        <WindowButtons>
          <WindowButton aria-label="最小化"><svg width="12" height="12" viewBox="0 0 12 12"><path d="M0 5.500H12" stroke="#111" /></svg></WindowButton>
          <WindowButton aria-label="还原"><svg width="13" height="13" viewBox="0 0 13 13"><rect x=".5" y="3.500" width="9" height="9" rx="2" fill="none" stroke="#111" /><path d="M3 1.500Q4 .5 5 .5H10Q12.500 .5 12.500 3V8Q12.500 9 11.500 10" fill="none" stroke="#111" /></svg></WindowButton>
          <WindowButton aria-label="关闭"><svg width="13" height="13" viewBox="0 0 13 13"><path d="M.5 .5 12.500 12.500M12.500 .5 .5 12.500" stroke="#111" /></svg></WindowButton>
        </WindowButtons>
      </TitleBar>
      <MenuBar>
        {menus.map(([t, k]) => (
          <MenuItem key={t}><Txt t={t} s={14} />{k && <Half $s={14}>(<u>{k}</u>)</Half>}</MenuItem>
        ))}
        <Workspace>工作区:<Combo label="工作区" value="Alt 菜单和工具栏" w={204} h={23} pad={6} /></Workspace>
      </MenuBar>
      <ToolArea />
      <RibbonTabs>
        <RibbonTab $on $w={68}>建模</RibbonTab><RibbonTab $w={118}>自由形式</RibbonTab><RibbonTab $w={84}>选择</RibbonTab><RibbonTab $w={117}>对象绘制</RibbonTab><RibbonTab $w={86}>填充</RibbonTab>
        <svg width="50" height="21" viewBox="0 0 50 21"><rect x="12" y="5" width="17" height="9" rx="2" fill="#f0f0f0" /><path d="M17 7h7l-3.500 4z" fill="#333" /><path d="M36 8h6l-3 4z" fill="#ccc" /></svg>
      </RibbonTabs>
      <RibbonPanels>
        {["多边形建模", "修改选择", "编辑", "几何体(全部)", "细分", "对齐", "属性"].map((t) => <RibbonPanel key={t}>{t}</RibbonPanel>)}
      </RibbonPanels>
      <Main>
        <Work>
          <WorkTop>
            <SideBar>
              <Dots $m="0 8px 0 2px" />
              <SideLogo aria-label="RDF3"><svg width="26" height="26" viewBox="0 0 30 30"><path d="M15 2 28 7 26 22 15 29 4 22 2 7z" fill="#fff" /><path d="M2 7l13 6 13-6M15 13v16" fill="none" stroke="#8b8b8b" strokeWidth="2" /></svg></SideLogo>
              <SideItem $accent>RDF3</SideItem>
              {side.map((t) => <SideItem key={t}>{t}</SideItem>)}
            </SideBar>
            <Viewport />
          </WorkTop>
          <StatusBar />
        </Work>
        <NaviPanel />
        <CommandPanel />
        <PluginPanel />
      </Main>
      <Highlight />
      <Recorder>
        <Dots $m="3px 2px 4px" />
        <RecButton $on aria-label="播放"><svg width="30" height="30" viewBox="0 0 30 30"><defs><linearGradient id="pv" x2="0" y2="1"><stop stopColor="#1f62f2" /><stop offset="1" stopColor="#8a2bf0" /></linearGradient></defs><circle cx="15" cy="15" r="12.500" fill="url(#pv)" /><path d="M12 21V10l4-1q3 1 3 3v6q-2 1-6 1" fill="none" stroke="#fff" strokeWidth="2.500" /><path d="M21 18l8 6-8 6z" fill="#9b30ff" stroke="#2d2d2d" /></svg></RecButton>
        <RecButton aria-label="录制"><svg width="30" height="30" viewBox="0 0 30 30"><circle cx="15" cy="15" r="11" fill="none" stroke="#4a4a4a" strokeWidth="2.500" strokeDasharray="28 6" /><circle cx="15" cy="15" r="4" fill="#555" /></svg></RecButton>
        <RecButton aria-label="摄像"><svg width="30" height="30" viewBox="0 0 30 30"><path d="M1 6H25V24H1zM26 12l4-3v12l-4-3z" fill="#4f4f4f" /></svg></RecButton>
        <RecButton aria-label="拍照"><svg width="30" height="30" viewBox="0 0 30 30"><path d="M2 8H9L11 5H19L21 8H27V24H2z" fill="#484848" /><circle cx="15" cy="16" r="5.500" fill="#222" stroke="#5a5a5a" /><path d="M20 20h5v-3l5 5-5 5v-3h-5z" fill="#606060" /></svg></RecButton>
        <RecButton aria-label="更多"><svg width="30" height="30" viewBox="0 0 30 30"><path d="M3 10Q5 5 9 6L11 4H19L24 8V24H3z" fill="#4a4a4a" /></svg></RecButton>
      </Recorder>
      <Chip>
        <svg width="58" height="26" viewBox="0 0 58 26"><path d="M2 1V26" stroke="#bbb" strokeWidth="2" strokeDasharray="2 3" /><circle cx="21" cy="14" r="10.500" fill="#0fb878" /><path d="M19 20V9h4a3 3 0 0 1 0 7H14" fill="none" stroke="#fff" strokeWidth="2.400" /><rect x="45" y="4" width="8" height="5" rx="2" fill="none" stroke="#777" strokeWidth="1.600" /><path d="M45 17v5h8v-5" fill="none" stroke="#444" strokeWidth="1.800" /></svg>
      </Chip>
      <Mascot width="46" height="20" viewBox="0 0 46 20"><path d="M2 20V2L13 7Q23 2 33 7L44 2V20z" fill="#333" /><path d="M3 2 12 8 5 14zM43 2 34 8 41 14z" fill="#3fe0a0" /><ellipse cx="23" cy="19" rx="16" ry="12" fill="#f2f2f2" /><ellipse cx="23" cy="21" rx="12" ry="8" fill="#2fbfae" /><path d="M2 17h6M38 17h6" stroke="#e4572e" strokeWidth="3" /></Mascot>
    </Shell>
  );
}
